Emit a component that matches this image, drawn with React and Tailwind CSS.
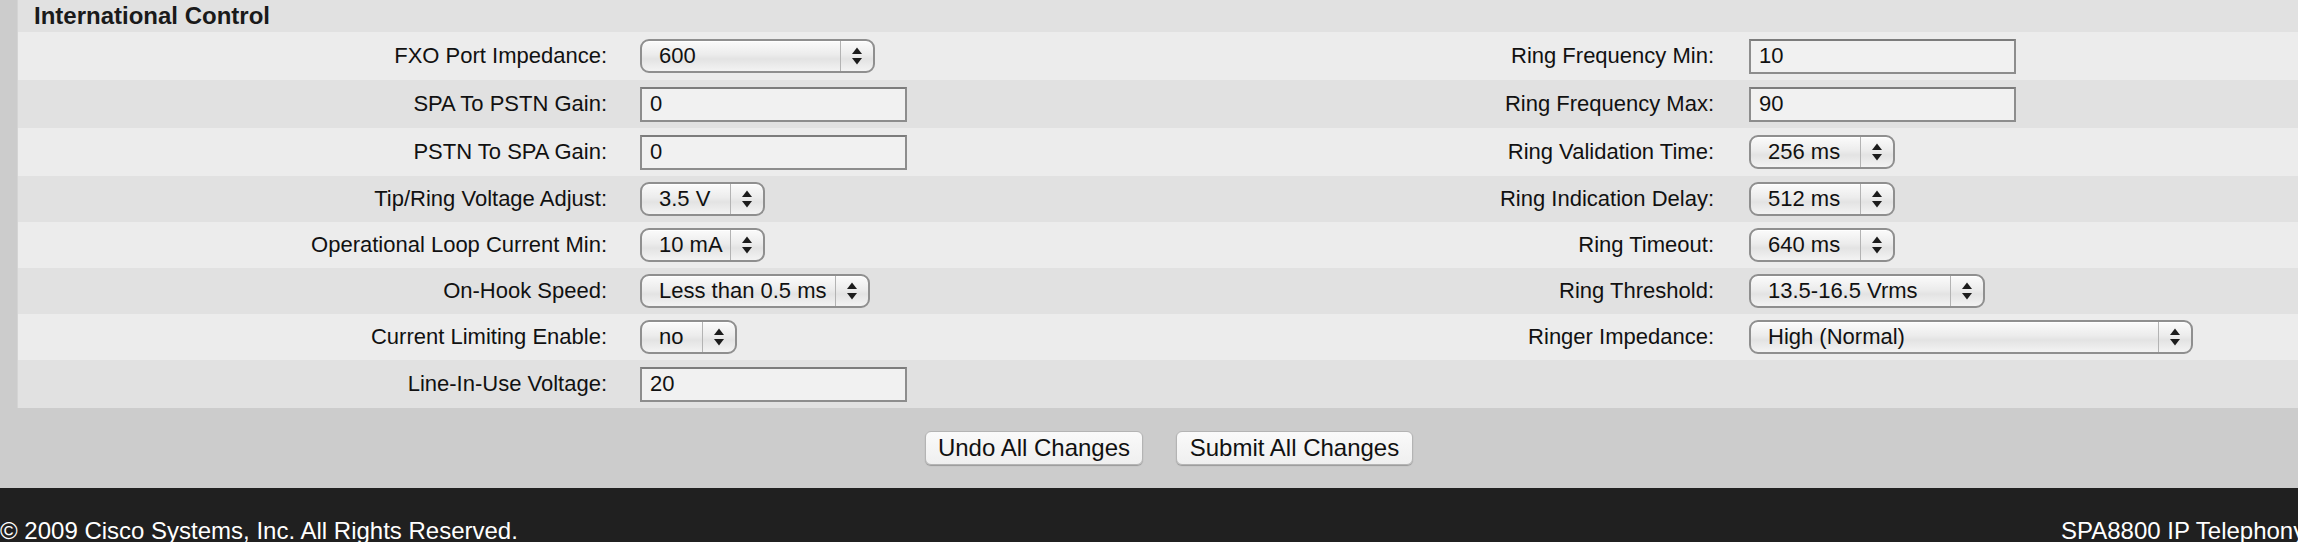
import React from "react";

function Arrows() {
  return (
    <svg width="12" height="18" viewBox="0 0 12 18" aria-hidden="true">
      <polygon points="1,7 6,0.5 11,7" fill="#1c1c1c" />
      <polygon points="1,11 11,11 6,17.5" fill="#1c1c1c" />
    </svg>
  );
}

function Select({ value, width }) {
  return (
    <div
      className="flex h-[34px] items-stretch rounded-[9px] border-2 border-[#8f8f8f] bg-[linear-gradient(#fbfbfb,#ececec_45%,#e3e3e3_60%,#f3f3f3)] shadow-[inset_0_1px_0_#ffffff]"
      style={{ width }}
    >
      <div className="flex flex-1 items-center whitespace-nowrap pl-[17px] text-[22px] leading-none text-[#111]">
        {value}
      </div>
      <div className="flex w-[33px] items-center justify-center border-l border-[#b3b3b3]">
        <Arrows />
      </div>
    </div>
  );
}

function TextInput({ value }) {
  return (
    <div className="flex h-[35px] w-[267px] items-center border-2 border-[#8d8d8d] border-t-[#7c7c7c] bg-[#f1f1f1] pl-[8px] text-[22px] leading-none text-[#111]">
      {value}
    </div>
  );
}

function Control({ c }) {
  if (!c) return null;
  if (c.type === "select") return <Select value={c.value} width={c.width} />;
  return <TextInput value={c.value} />;
}

const rows = [
  {
    l: "FXO Port Impedance:",
    lc: { type: "select", value: "600", width: 235 },
    r: "Ring Frequency Min:",
    rc: { type: "input", value: "10" },
    h: "h-[48px]",
  },
  {
    l: "SPA To PSTN Gain:",
    lc: { type: "input", value: "0" },
    r: "Ring Frequency Max:",
    rc: { type: "input", value: "90" },
    h: "h-[48px]",
  },
  {
    l: "PSTN To SPA Gain:",
    lc: { type: "input", value: "0" },
    r: "Ring Validation Time:",
    rc: { type: "select", value: "256 ms", width: 146 },
    h: "h-[48px]",
  },
  {
    l: "Tip/Ring Voltage Adjust:",
    lc: { type: "select", value: "3.5 V", width: 125 },
    r: "Ring Indication Delay:",
    rc: { type: "select", value: "512 ms", width: 146 },
    h: "h-[46px]",
  },
  {
    l: "Operational Loop Current Min:",
    lc: { type: "select", value: "10 mA", width: 125 },
    r: "Ring Timeout:",
    rc: { type: "select", value: "640 ms", width: 146 },
    h: "h-[46px]",
  },
  {
    l: "On-Hook Speed:",
    lc: { type: "select", value: "Less than 0.5 ms", width: 230 },
    r: "Ring Threshold:",
    rc: { type: "select", value: "13.5-16.5 Vrms", width: 236 },
    h: "h-[46px]",
  },
  {
    l: "Current Limiting Enable:",
    lc: { type: "select", value: "no", width: 97 },
    r: "Ringer Impedance:",
    rc: { type: "select", value: "High (Normal)", width: 444 },
    h: "h-[46px]",
  },
  {
    l: "Line-In-Use Voltage:",
    lc: { type: "input", value: "20" },
    r: "",
    rc: null,
    h: "h-[48px]",
  },
];

export default function App() {
  return (
    <div className="h-[542px] w-[2298px] overflow-hidden bg-[#cccccc] font-['Liberation_Sans',Arial,sans-serif] text-[#111]">
      <div className="pl-[17px]">
        <div className="border-l border-[#d4d4d4]">
          <div className="h-[32px] bg-[#e1e1e1] pl-[16px] pt-[2px] text-[24px] font-bold leading-[28px] text-[#1a1a1a]">
            International Control
          </div>
          {rows.map((row, i) => (
            <div
              key={i}
              className={`flex items-center ${row.h} ${
                i % 2 === 0 ? "bg-[#ececec]" : "bg-[#e1e1e1]"
              }`}
            >
              <div className="w-[622px] shrink-0 whitespace-nowrap pr-[33px] text-right text-[22px] leading-none">
                {row.l}
              </div>
              <div className="w-[500px] shrink-0">
                <Control c={row.lc} />
              </div>
              <div className="w-[609px] shrink-0 whitespace-nowrap pr-[35px] text-right text-[22px] leading-none">
                {row.r}
              </div>
              <div className="flex-1">
                <Control c={row.rc} />
              </div>
            </div>
          ))}
        </div>
      </div>
      <div className="flex h-[80px] justify-center gap-[33px] pl-[40px] pt-[23px]">
        <button className="h-[34px] w-[218px] rounded-[6px] border border-[#b4b4b4] bg-[linear-gradient(#fafafa,#efefef)] text-[24px] leading-none text-[#111] shadow-[0_1px_1px_rgba(0,0,0,0.25)]">
          Undo All Changes
        </button>
        <button className="h-[34px] w-[237px] rounded-[6px] border border-[#b4b4b4] bg-[linear-gradient(#fafafa,#efefef)] text-[24px] leading-none text-[#111] shadow-[0_1px_1px_rgba(0,0,0,0.25)]">
          Submit All Changes
        </button>
      </div>
      <div className="flex h-[54px] overflow-hidden bg-[#202020] pt-[29px] text-[24px] leading-[27px] text-white">
        <div className="w-[2061px] shrink-0 whitespace-nowrap">
          © 2009 Cisco Systems, Inc. All Rights Reserved.
        </div>
        <div className="whitespace-nowrap">SPA8800 IP Telephony Gateway</div>
      </div>
    </div>
  );
}
